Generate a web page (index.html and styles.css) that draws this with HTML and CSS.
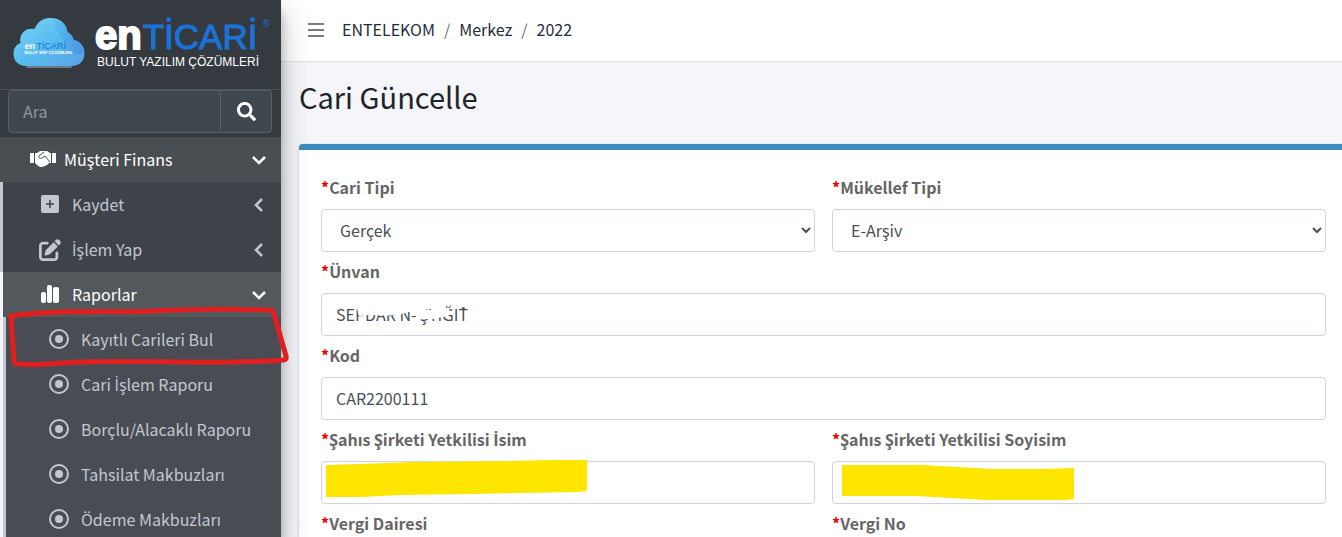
FILE: index.html
```html
<!DOCTYPE html>
<html lang="tr">
<head>
  <meta charset="UTF-8">
  <meta name="viewport" content="width=device-width, initial-scale=1.0">
  <title>Cari Güncelle</title>
  <link rel="stylesheet" href="styles.css">
</head>
<body>
  <div class="wrapper">
    <aside class="sidebar">
      <a href="#" class="brand">
        <svg class="cloud" viewBox="0 0 72 52">
          <defs>
            <linearGradient id="sky" x1="0" y1="0" x2="1" y2="1">
              <stop offset="0" stop-color="#7fd3f5"/>
              <stop offset="0.5" stop-color="#58bdf0"/>
              <stop offset="1" stop-color="#5b9fe6"/>
            </linearGradient>
            <linearGradient id="shade" x1="0" y1="0" x2="1" y2="0">
              <stop offset="0" stop-color="#3f8ee0" stop-opacity="0.1"/>
              <stop offset="1" stop-color="#3f8ee0" stop-opacity="0.6"/>
            </linearGradient>
          </defs>
          <path d="M14 49C5 49 1 43 1 37c0-7 4-10 7-11-2-9 5-16 14-14C26 3 32 1 38 1c10 0 16 6 17 14 5 3 6 6 6 8 7 1 11 7 11 13 0 8-5 13-13 13z" fill="url(#sky)"/>
          <path d="M40 3c9 1 14 6 15 12 5 3 6 6 6 8 7 1 10 7 10 13-4 2-10 2-15-2s-3-8-6-12-8-10-10-19z" fill="url(#shade)"/>
          <path d="M14 50h45" stroke="#a9bccb" stroke-width="1"/>
          <text x="12" y="32" class="cloud-en">en</text>
          <text x="24" y="32" class="cloud-name">TİCARİ</text>
          <text x="12" y="37" class="cloud-sub">BULUT ERP ÇÖZÜMLERİ</text>
        </svg>
        <span class="brand-text">
          <span class="brand-name"><b>en</b>TİCARİ<sup>®</sup></span>
          <span class="brand-sub">BULUT YAZILIM ÇÖZÜMLERİ</span>
        </span>
      </a>

      <form class="search">
        <input type="search" placeholder="Ara" aria-label="Ara">
        <button type="button" aria-label="Ara">
          <svg viewBox="0 0 512 512"><path fill="currentColor" d="M505 442.7L405.3 343c-4.5-4.5-10.6-7-17-7H372c27.6-35.3 44-79.7 44-128C416 93.1 322.9 0 208 0S0 93.1 0 208s93.1 208 208 208c48.3 0 92.7-16.4 128-44v16.3c0 6.4 2.5 12.5 7 17l99.7 99.7c9.4 9.4 24.6 9.4 33.9 0l28.3-28.3c9.4-9.4 9.4-24.6.1-34zM208 336c-70.7 0-128-57.2-128-128 0-70.7 57.2-128 128-128 70.7 0 128 57.2 128 128 0 70.7-57.2 128-128 128z"/></svg>
        </button>
      </form>

      <nav class="menu">
        <a href="#" class="item root">
          <svg class="icon wide" viewBox="0 0 26 18">
            <path fill="currentColor" d="M0 2h4v10H0zM22 2h4v10h-4zM5 2h2l3-2h3l2 0h2l3 2h1v10h-2l-2 2-2 1-3 1h-2l-3-2-2-2H5z"/>
            <path fill="none" stroke="#494e53" stroke-width="1" d="M14 1l-5 4c-1 2 1 3 3 2l3-2 5 6"/>
          </svg>
          <span>Müşteri Finans</span>
          <svg class="arrow" viewBox="0 0 16 16"><path d="M2 5l6 6 6-6"/></svg>
        </a>
        <div class="submenu">
          <a href="#" class="item">
            <svg class="icon" viewBox="0 0 22 22"><rect x="2" y="1" width="18" height="18" rx="2" fill="currentColor"/><path d="M11 6v8M7 10h8" stroke="#3f4349" stroke-width="1.5"/></svg>
            <span>Kaydet</span>
            <svg class="arrow" viewBox="0 0 16 16"><path d="M11 2L5 8l6 6"/></svg>
          </a>
          <a href="#" class="item">
            <svg class="icon" viewBox="0 0 512 512"><path fill="currentColor" d="M471.6 21.7c-21.9-21.9-57.3-21.9-79.2 0L362.3 51.7l97.9 97.9 30.1-30.1c21.9-21.9 21.9-57.3 0-79.2L471.6 21.7zm-299.2 220c-6.1 6.1-10.8 13.6-13.5 21.9l-29.6 88.8c-2.9 8.6-.6 18.1 5.8 24.6s15.9 8.7 24.6 5.8l88.8-29.6c8.2-2.7 15.7-7.4 21.9-13.5L437.7 172.3 339.7 74.3 172.4 241.7zM96 64C43 64 0 107 0 160V416c0 53 43 96 96 96H352c53 0 96-43 96-96V320c0-17.7-14.3-32-32-32s-32 14.3-32 32v96c0 17.7-14.3 32-32 32H96c-17.7 0-32-14.3-32-32V160c0-17.7 14.3-32 32-32h96c17.7 0 32-14.3 32-32s-14.3-32-32-32H96z"/></svg>
            <span><b class="dotted">İ</b>şlem Yap</span>
            <svg class="arrow" viewBox="0 0 16 16"><path d="M11 2L5 8l6 6"/></svg>
          </a>
        </div>
        <div class="submenu open">
          <a href="#" class="item active">
            <svg class="icon" viewBox="0 0 22 22"><g fill="currentColor"><rect x="2" y="8" width="5" height="11" rx="2"/><rect x="8" y="1" width="5" height="18" rx="2"/><rect x="14" y="3" width="6" height="16" rx="2"/></g></svg>
            <span>Raporlar</span>
            <svg class="arrow" viewBox="0 0 16 16"><path d="M2 5l6 6 6-6"/></svg>
          </a>
          <div class="reports">
            <a href="#" class="item">
              <svg class="icon" viewBox="0 0 22 22"><circle cx="11" cy="10" r="9" fill="none" stroke="currentColor" stroke-width="2"/><circle cx="11" cy="10" r="4" fill="currentColor"/></svg>
              <span>Kayıtlı Carileri Bul</span>
            </a>
            <a href="#" class="item">
              <svg class="icon" viewBox="0 0 22 22"><circle cx="11" cy="10" r="9" fill="none" stroke="currentColor" stroke-width="2"/><circle cx="11" cy="10" r="4" fill="currentColor"/></svg>
              <span>Cari <b class="dotted">İ</b>şlem Raporu</span>
            </a>
            <a href="#" class="item">
              <svg class="icon" viewBox="0 0 22 22"><circle cx="11" cy="10" r="9" fill="none" stroke="currentColor" stroke-width="2"/><circle cx="11" cy="10" r="4" fill="currentColor"/></svg>
              <span>Borçlu/Alacaklı Raporu</span>
            </a>
            <a href="#" class="item">
              <svg class="icon" viewBox="0 0 22 22"><circle cx="11" cy="10" r="9" fill="none" stroke="currentColor" stroke-width="2"/><circle cx="11" cy="10" r="4" fill="currentColor"/></svg>
              <span>Tahsilat Makbuzları</span>
            </a>
            <a href="#" class="item">
              <svg class="icon" viewBox="0 0 22 22"><circle cx="11" cy="10" r="9" fill="none" stroke="currentColor" stroke-width="2"/><circle cx="11" cy="10" r="4" fill="currentColor"/></svg>
              <span>Ödeme Makbuzları</span>
            </a>
            <!-- Hand drawn frame round the first report -->
            <svg class="frame" viewBox="0 0 284 62"><path d="M8 11C60 4 110 8 150 6s80-2 118-1q2 0 3 4l12 42q1 4-3 4c-60 5-120 0-200 2-20 0-40 4-66 2q-3 0-3-4z"/></svg>
          </div>
        </div>
      </nav>
    </aside>

    <main class="content">
      <header class="topbar">
        <button type="button" class="toggle" aria-label="Menü"><svg viewBox="0 0 16 16"><path d="M0 2h16M0 8h16M0 14h16"/></svg></button>
        <a href="#">ENTELEKOM</a><i>/</i><a href="#">Merkez</a><i>/</i><a href="#">2022</a>
      </header>

      <h1>Cari Güncelle</h1>

      <form class="card">
        <div class="field">
          <label for="type"><em>*</em>Cari Tipi</label>
          <select id="type"><option>Gerçek</option></select>
        </div>
        <div class="field">
          <label for="taxpayer"><em>*</em>Mükellef Tipi</label>
          <select id="taxpayer"><option>E-Arşiv</option></select>
        </div>
        <div class="field full">
          <label for="title"><em>*</em>Ünvan</label>
          <input type="text" id="title" value="SEPDAR N- ŞYİĞİT">
          <svg class="mark erase" viewBox="0 0 140 40"><path d="M27 17C40 13 58 19 72 14s14 2 22 5 12-3 24-2"/></svg>
        </div>
        <div class="field full">
          <label for="code"><em>*</em>Kod</label>
          <input type="text" id="code" value="CAR2200111">
        </div>
        <div class="field">
          <label for="name"><em>*</em>Şahıs Şirketi Yetkilisi <b class="dotted">İ</b>sim</label>
          <input type="text" id="name">
          <svg class="mark first" viewBox="0 0 266 40"><path d="M5 5l35-1 50-2 100-1 76-2v32l-10 1-106 2-70 1-40 2H5z"/></svg>
        </div>
        <div class="field">
          <label for="surname"><em>*</em>Şahıs Şirketi Yetkilisi Soyisim</label>
          <input type="text" id="surname">
          <svg class="mark last" viewBox="0 0 266 40"><path d="M10 5l80 0 70 4h50l32-1v31l-8 1h-80l-70-4H10z"/></svg>
        </div>
        <div class="field">
          <label for="office"><em>*</em>Vergi Dairesi</label>
          <input type="text" id="office">
        </div>
        <div class="field">
          <label for="taxno"><em>*</em>Vergi No</label>
          <input type="text" id="taxno">
        </div>
      </form>
    </main>
  </div>
</body>
</html>
```
FILE: styles.css
```css
* {
  box-sizing: border-box;
}

body {
  margin: 0;
  font-family: "Noto Sans CJK JP", "Noto Sans", sans-serif;
  font-size: 16px;
  line-height: 27px;
  color: #212529;
  background-color: #f4f6f9;
}

a {
  color: inherit;
  text-decoration: none;
}

.dotted {
  font-family: "Open Sans", sans-serif;
  font-weight: inherit;
  line-height: 1;
}

.wrapper {
  display: flex;
  height: 100vh;
  overflow: hidden;
}

/* Sidebar */
.sidebar {
  position: relative;
  z-index: 1;
  flex: 0 0 281px;
  background-color: #343a40;
  color: #c2c7d0;
  box-shadow: 0 14px 28px rgba(0, 0, 0, 0.25), 0 10px 10px rgba(0, 0, 0, 0.22);
}

.brand {
  display: flex;
  gap: 10px;
  height: 90px;
  padding: 17px 8px 0 12px;
  border-bottom: 1px solid #4b545c;
}

.cloud {
  width: 73px;
  height: 52px;
}

.cloud-en,
.cloud-name,
.cloud-sub {
  font-family: "Liberation Sans", sans-serif;
  font-size: 9px;
  fill: #1a73d9;
}

.cloud-en,
.cloud-sub {
  font-weight: bold;
  fill: #fff;
}

.cloud-sub {
  font-size: 4px;
}

.brand-text {
  display: flex;
  flex-direction: column;
  gap: 2px;
  font-family: "Liberation Sans", sans-serif;
  white-space: nowrap;
}

.brand-name {
  display: flex;
  align-items: baseline;
  height: 36px;
  font-size: 35px;
  line-height: 36px;
  color: #1a73d9;
  -webkit-text-stroke: 1px #1a73d9;
}

.brand-name b {
  margin-right: 1px;
  font-size: 40px;
  color: #fff;
  -webkit-text-stroke: 2px #fff;
}

.brand-name sup {
  align-self: flex-start;
  margin-left: 5px;
  font-size: 10px;
  line-height: 14px;
  -webkit-text-stroke: 0;
}

.brand-sub {
  padding-left: 2px;
  font-size: 12px;
  line-height: 14px;
  color: #fff;
}

.search {
  display: flex;
  height: 43px;
  margin: 0 9px 4px 8px;
}

.search input {
  flex: 1;
  min-width: 0;
  padding: 0 14px;
  border: 1px solid #56606a;
  border-radius: 4px 0 0 4px;
  background-color: #3f474e;
  color: #fff;
  font: inherit;
}

.search input::placeholder {
  color: #8f979e;
}

.search button {
  width: 51px;
  padding: 2px 0 0;
  border: 1px solid #56606a;
  border-left: none;
  border-radius: 0 4px 4px 0;
  background-color: #3f474e;
  color: #fff;
}

.search svg {
  width: 19px;
  height: 19px;
}

.item {
  display: flex;
  align-items: center;
  height: 45px;
  padding: 0 14px 0 36px;
}

.item span {
  flex: 1;
  white-space: nowrap;
}

.icon {
  width: 22px;
  height: 22px;
  margin-right: 11px;
}

.icon.wide {
  width: 26px;
  height: 18px;
  margin-right: 8px;
}

.arrow {
  width: 16px;
  height: 16px;
  fill: none;
  stroke: currentColor;
  stroke-width: 2.5;
}

.root {
  padding-left: 30px;
  background-color: #494e53;
  color: #fff;
}

.submenu {
  border-left: 3px solid #c2c7d0;
  background-color: #3f4349;
}

.submenu.open {
  border-left-color: #f4f6f9;
}

.active {
  background-color: #52585c;
  color: #fff;
}

.reports {
  position: relative;
  border-left: 3px solid #c2c7d0;
  background-color: #494d53;
}

.reports .item {
  padding-left: 42px;
}

.frame {
  position: absolute;
  top: -12px;
  left: -3px;
  width: 284px;
  height: 62px;
  overflow: visible;
  fill: none;
  stroke: #e02020;
  stroke-width: 5;
}

/* Page */
.content {
  flex: 1;
  min-width: 0;
}

.topbar {
  display: flex;
  align-items: center;
  height: 62px;
  padding: 0 0 2px 27px;
  border-bottom: 1px solid #dee2e6;
  background-color: #fff;
  color: #1f2d3d;
}

.toggle {
  width: 16px;
  height: 16px;
  margin-right: 18px;
  padding: 0;
  border: none;
  background: none;
}

.toggle svg {
  display: block;
  fill: none;
  stroke: #7b7b7b;
  stroke-width: 2;
}

.topbar i {
  margin: 0 9px;
  font-style: normal;
  color: #6c757d;
}

h1 {
  margin: 15px 18px 28px;
  font-size: 29px;
  font-weight: 400;
  line-height: 39px;
}

.card {
  display: grid;
  grid-template-columns: 1fr 1fr;
  gap: 6px 17px;
  margin-left: 18px;
  padding: 24px 16px 24px 22px;
  border-top: 6px solid #3c8dbc;
  border-radius: 4px 0 0 0;
  background-color: #fff;
  box-shadow: 0 0 1px rgba(0, 0, 0, 0.13), 0 1px 3px rgba(0, 0, 0, 0.2);
}

.field {
  position: relative;
}

.full {
  grid-column: 1 / 3;
}

label {
  display: block;
  height: 27px;
  margin-bottom: 8px;
  font-weight: 700;
  line-height: 26px;
  color: #666;
}

label em {
  font-style: normal;
  color: #e00;
}

.field input,
.field select {
  display: block;
  width: 100%;
  height: 43px;
  padding: 0 14px 2px;
  border: 1px solid #ced4da;
  border-radius: 4px;
  background-color: #fff;
  color: #495057;
  font: inherit;
}

/* Marker strokes over the values */
.mark {
  position: absolute;
  top: 34px;
  left: 0;
  width: 266px;
  height: 40px;
  fill: #ffe600;
}

.erase {
  top: 37px;
  left: 10px;
  width: 140px;
  fill: none;
  stroke: #fff;
  stroke-width: 9;
}
```
